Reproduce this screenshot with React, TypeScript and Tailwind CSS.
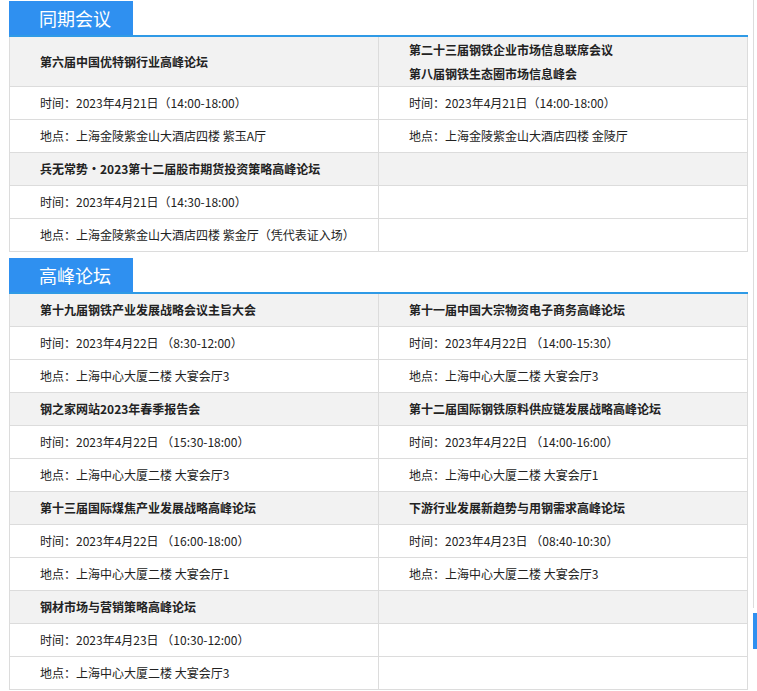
import React from "react";

type Ev = { t: string[]; time: string; place: string } | null;

const s1: [Ev, Ev][] = [
  [
    { t: ["第六届中国优特钢行业高峰论坛"], time: "时间：2023年4月21日（14:00-18:00）", place: "地点：上海金陵紫金山大酒店四楼 紫玉A厅" },
    { t: ["第二十三届钢铁企业市场信息联席会议", "第八届钢铁生态圈市场信息峰会"], time: "时间：2023年4月21日（14:00-18:00）", place: "地点：上海金陵紫金山大酒店四楼 金陵厅" },
  ],
  [
    { t: ["兵无常势•2023第十二届股市期货投资策略高峰论坛"], time: "时间：2023年4月21日（14:30-18:00）", place: "地点：上海金陵紫金山大酒店四楼 紫金厅（凭代表证入场）" },
    null,
  ],
];

const s2: [Ev, Ev][] = [
  [
    { t: ["第十九届钢铁产业发展战略会议主旨大会"], time: "时间：2023年4月22日 （8:30-12:00）", place: "地点：上海中心大厦二楼 大宴会厅3" },
    { t: ["第十一届中国大宗物资电子商务高峰论坛"], time: "时间：2023年4月22日 （14:00-15:30）", place: "地点：上海中心大厦二楼 大宴会厅3" },
  ],
  [
    { t: ["钢之家网站2023年春季报告会"], time: "时间：2023年4月22日 （15:30-18:00）", place: "地点：上海中心大厦二楼 大宴会厅3" },
    { t: ["第十二届国际钢铁原料供应链发展战略高峰论坛"], time: "时间：2023年4月22日 （14:00-16:00）", place: "地点：上海中心大厦二楼 大宴会厅1" },
  ],
  [
    { t: ["第十三届国际煤焦产业发展战略高峰论坛"], time: "时间：2023年4月22日 （16:00-18:00）", place: "地点：上海中心大厦二楼 大宴会厅1" },
    { t: ["下游行业发展新趋势与用钢需求高峰论坛"], time: "时间：2023年4月23日 （08:40-10:30）", place: "地点：上海中心大厦二楼 大宴会厅3" },
  ],
  [
    { t: ["钢材市场与营销策略高峰论坛"], time: "时间：2023年4月23日 （10:30-12:00）", place: "地点：上海中心大厦二楼 大宴会厅3" },
    null,
  ],
];

function Cell({ children, head, right, h }: { children?: React.ReactNode; head?: boolean; right?: boolean; h: number }) {
  return (
    <div
      className={`flex flex-col justify-center pl-[30px] border-b border-[#dcdcdc] ${right ? "" : "border-r"} ${head ? "bg-[#f2f2f2] font-bold" : "bg-white"}`}
      style={{ height: h }}
    >
      {children}
    </div>
  );
}

function Section({ title, rows }: { title: string; rows: [Ev, Ev][] }) {
  return (
    <div>
      <div className="border-b-[2px] border-[#2f9ae6]">
        <div className="w-[124px] h-[34px] bg-[#2f90f0] text-white text-[18px] pl-[30px] flex items-center">{title}</div>
      </div>
      <div className="border-l border-r border-[#dcdcdc] grid grid-cols-[369px_1fr] text-[12px] text-[#222]">
        {rows.map((r, i) => {
          const hh = r.some((e) => e && e.t.length > 1) ? 50 : 33;
          return (
            <React.Fragment key={i}>
              {[0, 1].flatMap((k) => [])}
              <Cell head h={hh}>{r[0]?.t.map((x) => <div key={x} className="leading-[24px]">{x}</div>)}</Cell>
              <Cell head right h={hh}>{r[1]?.t.map((x) => <div key={x} className="leading-[24px]">{x}</div>)}</Cell>
              <Cell h={33}>{r[0]?.time}</Cell>
              <Cell right h={33}>{r[1]?.time}</Cell>
              <Cell h={33}>{r[0]?.place}</Cell>
              <Cell right h={33}>{r[1]?.place}</Cell>
            </React.Fragment>
          );
        })}
      </div>
    </div>
  );
}

export default function App() {
  return (
    <div className="relative w-[757px] h-[691px] bg-white overflow-hidden" style={{ fontFamily: '"Noto Sans CJK SC", "Noto Sans", sans-serif' }}>
      <div className="w-[739px] ml-[9px] pt-[1px] flex flex-col gap-[6px]">
        <Section title="同期会议" rows={s1} />
        <Section title="高峰论坛" rows={s2} />
      </div>
      <div className="absolute left-[753px] top-0 h-[608px] w-px bg-[#dcdcdc]" />
      <div className="absolute left-[753px] top-[613px] h-[36px] w-[4px] bg-[#2f90f0]" />
    </div>
  );
}
